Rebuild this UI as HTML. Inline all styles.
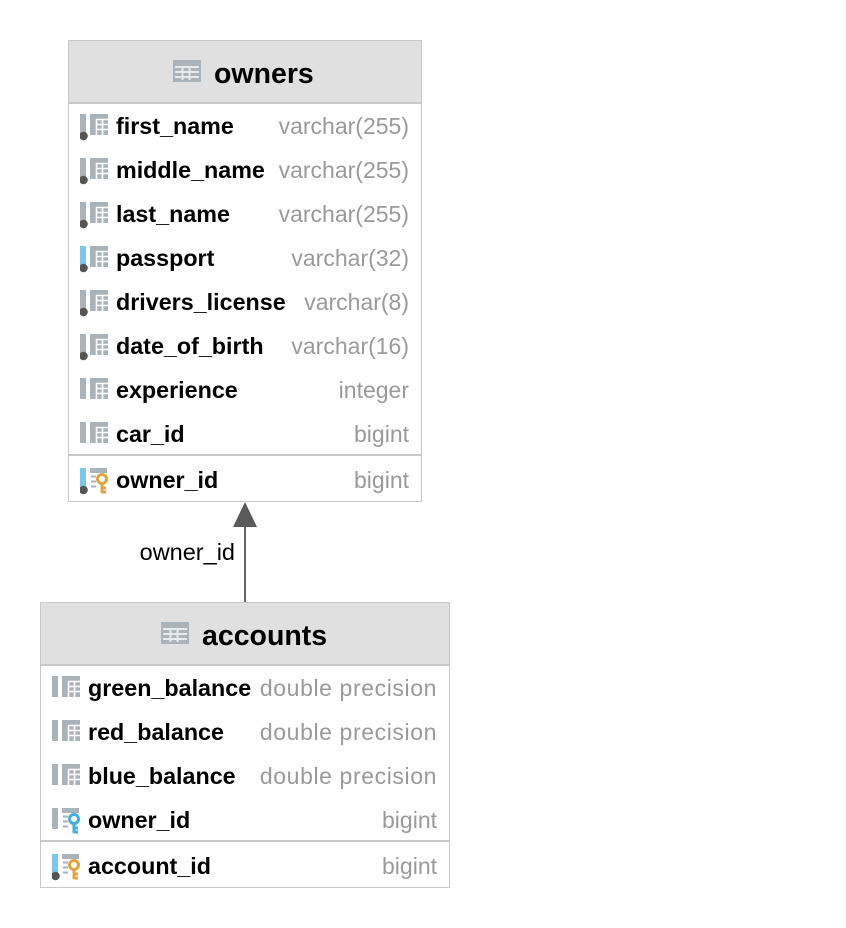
<!DOCTYPE html>
<html><head><meta charset="utf-8"><style>
body{margin:0;width:846px;height:928px;background:#fff;position:relative;overflow:hidden;font-family:"Liberation Sans",sans-serif}
.t{position:absolute;border:1px solid #c8c8c8;background:#fff;box-sizing:border-box}
.h{position:absolute;left:0;right:0;top:0;height:61px;background:#e0e0e0;border-bottom:2px solid #c8c8c8}
.ti{position:absolute;font-weight:bold;font-size:28.5px;color:#000;top:17px}
.r{position:absolute;left:0;right:0;height:44px}
.n{position:absolute;left:47px;top:8px;font-weight:bold;font-size:23.3px;color:#000}
.y{position:absolute;right:12px;top:8px;font-size:23px;color:#9a9a9a}
.ic{position:absolute;left:11px;top:9px}
.sep{position:absolute;left:0;right:0;height:2px;background:#c8c8c8}
</style></head><body>
<svg width="0" height="0" style="position:absolute">
<defs>
<g id="grid"><rect x="10" y="0" width="18" height="21" fill="#aab2ba"/><path d="M16 5.5H28M16 10.5H28M16 15.5H28M16.5 5V21M22.5 5V21" stroke="#fff" stroke-width="1.6"/></g>
<g id="col"><rect x="0" y="0" width="6" height="21" fill="#aab2ba"/><use href="#grid"/></g>
<g id="colb"><rect x="0" y="0" width="6" height="21" fill="#7ac7e8"/><use href="#grid"/></g>
<circle id="dot" cx="3.5" cy="22" r="4.3" fill="#555"/>
<g id="kbase"><rect x="10" y="0" width="17" height="5" fill="#aab2ba"/><path d="M11 8.5H16M11 13.5H16M11 18.5H16" stroke="#aab2ba" stroke-width="2"/></g>
<g id="keyo"><circle cx="22" cy="11" r="4.5" fill="none" stroke="#e0a53e" stroke-width="3"/><path d="M22 15V25M22 20H26M22 24H26" stroke="#e0a53e" stroke-width="3"/></g>
<g id="keyb"><circle cx="22" cy="11" r="4.5" fill="none" stroke="#3eaee0" stroke-width="3"/><path d="M22 15V25M22 20H26M22 24H26" stroke="#3eaee0" stroke-width="3"/></g>
<g id="tbl"><rect x="0" y="0" width="28" height="22" fill="#aab2ba"/><path d="M2 7H26M2 12H26M2 17H26M9.5 7V20M16.5 7V20" stroke="#e8ebee" stroke-width="2"/></g>
</defs></svg>

<div class="t" style="left:68px;top:40px;width:354px;height:462px">
<div class="h"></div>
<svg style="position:absolute;left:104px;top:19px" width="28" height="22"><use href="#tbl"/></svg>
<div class="ti" style="left:145px">owners</div>
<div class="r" style="top:64px"><svg class="ic" width="30" height="28"><use href="#col"/><use href="#dot"/></svg><span class="n">first_name</span><span class="y">varchar(255)</span></div>
<div class="r" style="top:108px"><svg class="ic" width="30" height="28"><use href="#col"/><use href="#dot"/></svg><span class="n">middle_name</span><span class="y">varchar(255)</span></div>
<div class="r" style="top:152px"><svg class="ic" width="30" height="28"><use href="#col"/><use href="#dot"/></svg><span class="n">last_name</span><span class="y">varchar(255)</span></div>
<div class="r" style="top:196px"><svg class="ic" width="30" height="28"><use href="#colb"/><use href="#dot"/></svg><span class="n">passport</span><span class="y">varchar(32)</span></div>
<div class="r" style="top:240px"><svg class="ic" width="30" height="28"><use href="#col"/><use href="#dot"/></svg><span class="n">drivers_license</span><span class="y">varchar(8)</span></div>
<div class="r" style="top:284px"><svg class="ic" width="30" height="28"><use href="#col"/><use href="#dot"/></svg><span class="n">date_of_birth</span><span class="y">varchar(16)</span></div>
<div class="r" style="top:328px"><svg class="ic" width="30" height="28"><use href="#col"/></svg><span class="n">experience</span><span class="y">integer</span></div>
<div class="r" style="top:372px"><svg class="ic" width="30" height="28"><use href="#col"/></svg><span class="n">car_id</span><span class="y">bigint</span></div>
<div class="sep" style="top:413px"></div>
<div class="r" style="top:418px"><svg class="ic" width="30" height="28"><rect x="0" y="0" width="6" height="21" fill="#7ac7e8"/><use href="#kbase"/><use href="#keyo"/><use href="#dot"/></svg><span class="n">owner_id</span><span class="y">bigint</span></div>
</div>

<svg style="position:absolute;left:0;top:0" width="846" height="928">
<path d="M245 526V602" stroke="#666" stroke-width="2"/>
<polygon points="245,502 233,527 257,527" fill="#5a5a5a"/>
<text x="235" y="560" text-anchor="end" font-family="Liberation Sans" font-size="23.5" fill="#000">owner_id</text>
</svg>

<div class="t" style="left:40px;top:602px;width:410px;height:286px">
<div class="h"></div>
<svg style="position:absolute;left:120px;top:19px" width="28" height="22"><use href="#tbl"/></svg>
<div class="ti" style="left:161px">accounts</div>
<div class="r" style="top:64px"><svg class="ic" width="30" height="28"><use href="#col"/></svg><span class="n">green_balance</span><span class="y" style="letter-spacing:0.6px">double precision</span></div>
<div class="r" style="top:108px"><svg class="ic" width="30" height="28"><use href="#col"/></svg><span class="n">red_balance</span><span class="y" style="letter-spacing:0.6px">double precision</span></div>
<div class="r" style="top:152px"><svg class="ic" width="30" height="28"><use href="#col"/></svg><span class="n">blue_balance</span><span class="y" style="letter-spacing:0.6px">double precision</span></div>
<div class="r" style="top:196px"><svg class="ic" width="30" height="28"><rect x="0" y="0" width="6" height="21" fill="#aab2ba"/><use href="#kbase"/><use href="#keyb"/></svg><span class="n">owner_id</span><span class="y">bigint</span></div>
<div class="sep" style="top:237px"></div>
<div class="r" style="top:242px"><svg class="ic" width="30" height="28"><rect x="0" y="0" width="6" height="21" fill="#7ac7e8"/><use href="#kbase"/><use href="#keyo"/><use href="#dot"/></svg><span class="n">account_id</span><span class="y">bigint</span></div>
</div>
</body></html>
